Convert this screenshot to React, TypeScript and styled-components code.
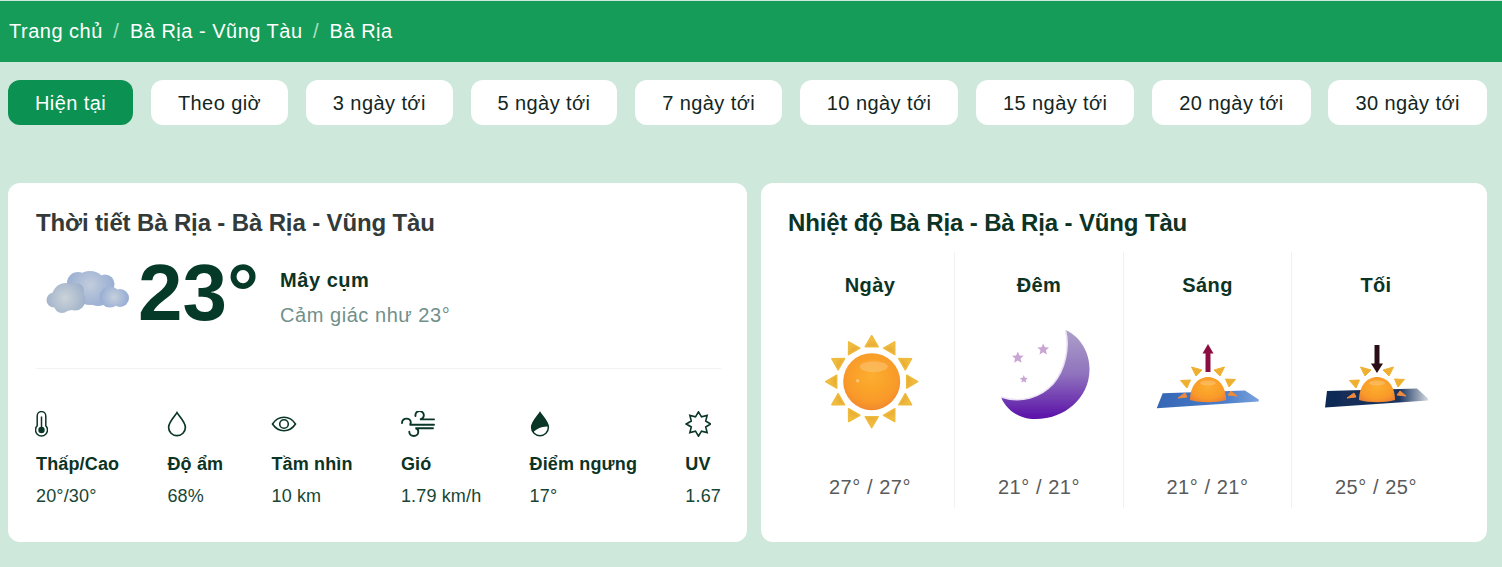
import React from "react";
import styled, { createGlobalStyle } from "styled-components";

const Global = createGlobalStyle`
  html, body { margin: 0; padding: 0; background: #cfe8dc; }
  body { font-family: "Liberation Sans", Arial, sans-serif; color: #0c3324; }
  * { box-sizing: border-box; }
`;

const Page = styled.div`
  width: 1502px;
  height: 567px;
  overflow: hidden;
  padding-top: 1px;
`;

const Crumbs = styled.nav`
  height: 61px;
  background: #169c59;
  display: flex;
  align-items: center;
  padding: 0 9px 1px;
  font-size: 20px;
  color: #fff;
`;

const Crumb = styled.span`
  letter-spacing: 0.5px;
`;

const Slash = styled.span`
  color: #a9e0c3;
  margin: 0 11px 0 10.5px;
`;

const Tabs = styled.div`
  display: flex;
  padding: 18px 15px 0 8px;
  justify-content: space-between;
`;

const Tab = styled.div<{ $active?: boolean }>`
  height: 45px;
  padding: 1px 27px 0;
  display: flex;
  align-items: center;
  border-radius: 12px;
  font-size: 20px;
  letter-spacing: 0.42px;
  white-space: nowrap;
  background: ${(p) => (p.$active ? "#0b9152" : "#fff")};
  color: ${(p) => (p.$active ? "#fff" : "#12261e")};
`;

const Cards = styled.div`
  display: flex;
  gap: 14px;
  padding: 58px 15px 0 8px;
`;

const Card = styled.section<{ $w: number }>`
  width: ${(p) => p.$w}px;
  height: 359px;
  background: #fff;
  border-radius: 12px;
`;

const NowCard = styled(Card)`
  padding: 26px 26px 0 28px;
`;

const TempCard = styled(Card)`
  padding: 26px 27px 0 25px;
`;

const Title = styled.h2<{ $dark?: boolean }>`
  margin: 0;
  font-size: 24px;
  line-height: 28px;
  font-weight: 700;
  letter-spacing: -0.14px;
  color: ${(p) => (p.$dark ? "#0c3324" : "#333a3a")};
`;

const TempTitle = styled(Title)`
  padding-left: 2px;
`;

const Current = styled.div`
  display: flex;
  align-items: center;
  height: 92px;
  margin-top: 10px;
`;

const CloudBox = styled.div`
  width: 102px;
  height: 65px;
  margin-bottom: 2px;
  flex: none;
  svg { display: block; margin-left: 4px; }
`;

const BigTemp = styled.div`
  font-size: 80px;
  line-height: 92px;
  font-weight: 700;
  color: #063a28;
  width: 142px;
  flex: none;
`;

const CondBlock = styled.div`
  display: flex;
  flex-direction: column;
  gap: 12px;
  margin-top: 10px;
  letter-spacing: 0.55px;
`;

const Cond = styled.div`
  font-size: 20px;
  line-height: 23px;
  font-weight: 700;
  color: #0c3324;
`;

const Feels = styled.div`
  font-size: 20px;
  line-height: 23px;
  color: #71908a;
`;

const Divider = styled.hr`
  border: 0;
  border-top: 1px solid #f1f3f2;
  margin: 29px 0 0;
`;

const Stats = styled.div`
  display: flex;
  justify-content: space-between;
  margin-top: 42px;
`;

const Stat = styled.div`
  display: flex;
  flex-direction: column;
`;

const StatIcon = styled.div`
  height: 26px;
  display: flex;
  align-items: center;
  svg { display: block; }
`;

const StatLabel = styled.div`
  margin-top: 17px;
  font-size: 18px;
  line-height: 21px;
  font-weight: 700;
  letter-spacing: 0.15px;
  color: #0c3324;
  white-space: nowrap;
`;

const StatValue = styled.div`
  margin-top: 11px;
  font-size: 18px;
  line-height: 21px;
  letter-spacing: 0.15px;
  color: #174635;
  white-space: nowrap;
`;

const Columns = styled.div`
  display: grid;
  grid-template-columns: 169px 169px 168px 168px;
  margin-top: 15px;
  width: 674px;
`;

const Column = styled.div<{ $last?: boolean }>`
  height: 256px;
  display: flex;
  flex-direction: column;
  align-items: center;
  padding-top: 21px;
  border-right: ${(p) => (p.$last ? "0" : "1px solid #f0f2f1")};
`;

const ColLabel = styled.div`
  font-size: 20px;
  line-height: 24px;
  font-weight: 700;
  letter-spacing: 0.4px;
  color: #0c3324;
`;

const ColIcon = styled.div`
  width: 120px;
  height: 110px;
  margin-top: 29px;
  svg { display: block; }
`;

const ColValue = styled.div`
  margin-top: 40px;
  font-size: 20px;
  line-height: 23px;
  letter-spacing: 0.55px;
  color: #5a5a5a;
`;

const ink = "#0a3627";

const Thermo = () => (
  <svg width="13" height="26" viewBox="0 0 13 26" fill="none" style={{ marginLeft: -1 }}>
    <path d="M2.200 14.800V4.900a4.300 4.300 0 0 1 8.600 0v9.900a6 6 0 1 1-8.600 0Z" stroke={ink} strokeWidth="1.500" />
    <circle cx="6.500" cy="19" r="3.200" fill={ink} />
    <path d="M6.500 5.500V19" stroke={ink} strokeWidth="1.500" />
  </svg>
);

const Drop = () => (
  <svg width="20" height="26" viewBox="0 0 20 26" fill="none">
    <path d="M10 1.600C7.600 5.600 1.600 11 1.600 16.300a8.400 8.400 0 0 0 16.800 0C18.400 11 12.400 5.600 10 1.600Z" stroke={ink} strokeWidth="1.700" />
  </svg>
);

const Eye = () => (
  <svg width="26" height="26" viewBox="0 0 26 26" fill="none">
    <path d="M1.500 13C4 9.200 8 6.300 13 6.300S22 9.200 24.500 13C22 16.800 18 19.700 13 19.700S4 16.800 1.500 13Z" stroke={ink} strokeWidth="1.600" />
    <circle cx="13" cy="13" r="4.300" stroke={ink} strokeWidth="1.600" />
  </svg>
);

const Wind = () => (
  <svg width="34" height="26" viewBox="0 0 34 26" fill="none" stroke={ink} strokeWidth="1.900" strokeLinecap="round">
    <path d="M14.500 5a4.200 4.200 0 1 1 4.400 3.400H33" />
    <path d="M1 12c0-2.700 2-4.400 4.500-4.400s4.300 1.800 4.300 4c0 1-.4 1.800-1.200 2.100H33" />
    <path d="M8.300 20.800c0 2.500 2 4.200 4.500 4.200s4.500-1.800 4.500-4.200c0-2-1.200-3.500-3-3.500H32" />
  </svg>
);

const DropHalf = () => (
  <svg width="20" height="26" viewBox="0 0 20 26">
    <path d="M10 1.600C7.600 5.600 1.600 11 1.600 16.300a8.400 8.400 0 0 0 16.800 0C18.400 11 12.400 5.600 10 1.600Z" fill="#fff" stroke={ink} strokeWidth="1.500" />
    <path d="M10 1.600C7.600 5.600 1.600 11 1.600 16.300c0 2 .6 3.600 1.600 5C6 18 12 15 18.400 15.500 17.800 10.600 12.300 5.400 10 1.600Z" fill={ink} />
  </svg>
);

const starPoints = Array.from({ length: 16 }, (_, i) => {
  const r = i % 2 === 0 ? 12.2 : 7.8;
  const a = (i * Math.PI) / 8 - Math.PI / 2;
  return `${(13.5 + r * Math.cos(a)).toFixed(2)},${(13 + r * Math.sin(a)).toFixed(2)}`;
}).join(" ");

const Star = () => (
  <svg width="26" height="26" viewBox="0 0 26 26" fill="none">
    <polygon points={starPoints} stroke={ink} strokeWidth="1.600" />
  </svg>
);

const Cloud = () => (
  <svg width="100" height="65" viewBox="0 0 100 65">
    <defs>
      <radialGradient id="cb" gradientUnits="userSpaceOnUse" cx="50" cy="25" r="30">
        <stop offset="0" stopColor="#c2ccdc" />
        <stop offset="1" stopColor="#8fa7d0" />
      </radialGradient>
      <radialGradient id="cl" gradientUnits="userSpaceOnUse" cx="25" cy="38" r="22">
        <stop offset="0" stopColor="#cbd3d9" />
        <stop offset="1" stopColor="#9cafc9" />
      </radialGradient>
      <radialGradient id="cr" gradientUnits="userSpaceOnUse" cx="74" cy="37" r="18">
        <stop offset="0" stopColor="#c6d0dc" />
        <stop offset="1" stopColor="#8aa4d2" />
      </radialGradient>
      <filter id="cs"><feGaussianBlur stdDeviation="0.6" /></filter>
    </defs>
    <g filter="url(#cs)">
      <g fill="url(#cb)">
        <circle cx="38" cy="23" r="11" />
        <circle cx="50" cy="28" r="17" />
        <circle cx="65" cy="24" r="9.500" />
        <circle cx="58" cy="34" r="12" />
      </g>
      <g fill="url(#cr)">
        <circle cx="70" cy="37" r="10.500" />
        <circle cx="80" cy="38" r="9" />
      </g>
      <g fill="url(#cl)">
        <circle cx="36" cy="31" r="8" />
        <circle cx="26" cy="37" r="14" />
        <circle cx="14" cy="40" r="7.500" />
        <circle cx="35" cy="40" r="10.500" />
        <circle cx="22" cy="45" r="8" />
      </g>
    </g>
  </svg>
);

const Defs = () => (
  <defs>
    <filter id="soft" x="-5%" y="-5%" width="110%" height="110%"><feGaussianBlur stdDeviation="0.45" /></filter>
    <radialGradient id="sun" cx="0.5" cy="0.4" r="0.65">
      <stop offset="0" stopColor="#fcae2e" />
      <stop offset="0.7" stopColor="#f99a2a" />
      <stop offset="1" stopColor="#ef8230" />
    </radialGradient>
    <linearGradient id="ray" x1="0" y1="0" x2="0" y2="1">
      <stop offset="0" stopColor="#f4c745" />
      <stop offset="1" stopColor="#e8aa35" />
    </linearGradient>
    <linearGradient id="moon" x1="0" y1="0" x2="0" y2="1">
      <stop offset="0" stopColor="#ada0c9" />
      <stop offset="0.5" stopColor="#8f72bd" />
      <stop offset="1" stopColor="#5a0fa8" />
    </linearGradient>
    <linearGradient id="plateBlue" x1="0" y1="0" x2="1" y2="0">
      <stop offset="0" stopColor="#3566b4" />
      <stop offset="0.7" stopColor="#4e80cb" />
      <stop offset="1" stopColor="#7ba3dc" />
    </linearGradient>
    <linearGradient id="plateDark" x1="0" y1="0" x2="1" y2="0">
      <stop offset="0" stopColor="#0f2a55" />
      <stop offset="0.72" stopColor="#1b3560" />
      <stop offset="0.9" stopColor="#8f9cb0" />
      <stop offset="1" stopColor="#d4dae2" />
    </linearGradient>
  </defs>
);

const Sun = () => {
  const cx = 61.7;
  const cy = 55.7;
  return (
    <svg width="120" height="110" viewBox="0 0 120 110">
      <Defs />
      <g filter="url(#soft)">
        {Array.from({ length: 12 }, (_, i) => (
          <polygon
            key={i}
            points={`${cx},${cy - 46} ${cx - 6.500},${cy - 35} ${cx + 6.500},${cy - 35}`}
            fill="url(#ray)"
            stroke="#eebb3e"
            strokeWidth="1.500"
            strokeLinejoin="round"
            transform={`rotate(${i * 30} ${cx} ${cy})`}
          />
        ))}
        <circle cx={cx} cy={cy} r="28.500" fill="url(#sun)" />
        <ellipse cx={cx + 2} cy={cy - 15} rx="14" ry="5.500" fill="#fff" opacity="0.2" />
        <circle cx={cx - 14} cy={cy - 1} r="1.800" fill="#fff" opacity="0.35" />
      </g>
    </svg>
  );
};

const Moon = () => (
  <svg width="120" height="110" viewBox="0 0 120 110">
    <Defs />
    <g filter="url(#soft)">
      <path
        d="M86.500 4C104 12 111 30 110.500 44 110 72 86 93 56.500 93 40 93 27 84 22 71 42 78 62 71 74 58 86 44 91 22 86.500 4Z"
        fill="url(#moon)"
      />
      <path d="M22 71C42 78 62 71 74 58 86 44 91 22 86.500 4" fill="none" stroke="#e9e2f4" strokeWidth="1.500" />
      <g fill="#c9a5d3">
        <path d="M38.800 25.500l1.700 4 4.200.3-3.200 2.800 1 4.200-3.700-2.300-3.700 2.300 1-4.200-3.200-2.800 4.200-.3Z" />
        <path d="M64.200 17.500l1.700 3.800 4.200.3-3.200 2.700 1 4.200-3.700-2.300-3.700 2.300 1-4.200-3.200-2.700 4.200-.3Z" />
        <path d="M44.800 49l1.100 2.800 3 .2-2.300 1.900.7 2.900-2.500-1.600-2.500 1.600.7-2.900-2.300-1.900 3-.2Z" />
      </g>
    </g>
  </svg>
);

const Horizon = ({ dir }: { dir: "up" | "down" }) => {
  const up = dir === "up";
  const ox = up ? 0 : 1;
  return (
    <svg width="120" height="110" viewBox="0 0 120 110">
      <Defs />
      <g transform={`translate(${ox} 0)`} filter="url(#soft)">
        {up ? (
          <polygon points="14.700,67.300 97,64.500 110.700,73.500 110.700,75.500 8.700,82.300" fill="url(#plateBlue)" />
        ) : (
          <polygon points="10,65 100,62.500 111,72.500 111,74.500 8,81.500" fill="url(#plateDark)" />
        )}
        <polygon points="48,50 43.500,41 54,44" fill="#efb030" stroke="#efb030" strokeLinejoin="round" />
        <polygon points="72,50 76.500,41 66,44" fill="#efb030" stroke="#efb030" strokeLinejoin="round" />
        <polygon points="39,62 32.500,54.500 42.500,54" fill="#efb030" stroke="#efb030" strokeLinejoin="round" />
        <polygon points="81,61 87.500,53.500 77.500,53" fill="#efb030" stroke="#efb030" strokeLinejoin="round" />
        <polygon points="30,72 37,67 39,71" fill="#ee8a3a" stroke="#ee8a3a" strokeLinejoin="round" />
        <polygon points="89,70 83,65 80,69" fill="#ee8a3a" stroke="#ee8a3a" strokeLinejoin="round" />
        <path d="M42 74c0-14 8-23 18-23s18 9 18 23c-10 3-26 3-36 0Z" fill="url(#sun)" />
        <ellipse cx="60" cy="57" rx="8" ry="2.500" fill="#fff" opacity="0.2" />
        {up ? (
          <path d="M60 18l5.500 9.500h-3v18.500h-5v-18.500h-3Z" fill="#8c1140" />
        ) : (
          <path d="M57.500 19h5v18.500h3.500L60 47 54 37.500h3.500Z" fill="#2b1013" />
        )}
      </g>
    </svg>
  );
};

const tabs = ["Hiện tại", "Theo giờ", "3 ngày tới", "5 ngày tới", "7 ngày tới", "10 ngày tới", "15 ngày tới", "20 ngày tới", "30 ngày tới"];

const stats = [
  { icon: <Thermo />, label: "Thấp/Cao", value: "20°/30°" },
  { icon: <Drop />, label: "Độ ẩm", value: "68%" },
  { icon: <Eye />, label: "Tầm nhìn", value: "10 km" },
  { icon: <Wind />, label: "Gió", value: "1.79 km/h" },
  { icon: <DropHalf />, label: "Điểm ngưng", value: "17°" },
  { icon: <Star />, label: "UV", value: "1.67" },
];

const parts = [
  { label: "Ngày", icon: <Sun />, value: "27° / 27°" },
  { label: "Đêm", icon: <Moon />, value: "21° / 21°" },
  { label: "Sáng", icon: <Horizon dir="up" />, value: "21° / 21°" },
  { label: "Tối", icon: <Horizon dir="down" />, value: "25° / 25°" },
];

export default function App() {
  return (
    <Page>
      <Global />
      <Crumbs>
        <Crumb>Trang chủ</Crumb>
        <Slash>/</Slash>
        <Crumb>Bà Rịa - Vũng Tàu</Crumb>
        <Slash>/</Slash>
        <Crumb>Bà Rịa</Crumb>
      </Crumbs>
      <Tabs>
        {tabs.map((t, i) => (
          <Tab key={t} $active={i === 0}>{t}</Tab>
        ))}
      </Tabs>
      <Cards>
        <NowCard $w={739}>
          <Title>Thời tiết Bà Rịa - Bà Rịa - Vũng Tàu</Title>
          <Current>
            <CloudBox><Cloud /></CloudBox>
            <BigTemp>23°</BigTemp>
            <CondBlock>
              <Cond>Mây cụm</Cond>
              <Feels>Cảm giác như 23°</Feels>
            </CondBlock>
          </Current>
          <Divider />
          <Stats>
            {stats.map((s) => (
              <Stat key={s.label}>
                <StatIcon>{s.icon}</StatIcon>
                <StatLabel>{s.label}</StatLabel>
                <StatValue>{s.value}</StatValue>
              </Stat>
            ))}
          </Stats>
        </NowCard>
        <TempCard $w={726}>
          <TempTitle $dark>Nhiệt độ Bà Rịa - Bà Rịa - Vũng Tàu</TempTitle>
          <Columns>
            {parts.map((p, i) => (
              <Column key={p.label} $last={i === 3}>
                <ColLabel>{p.label}</ColLabel>
                <ColIcon>{p.icon}</ColIcon>
                <ColValue>{p.value}</ColValue>
              </Column>
            ))}
          </Columns>
        </TempCard>
      </Cards>
    </Page>
  );
}
